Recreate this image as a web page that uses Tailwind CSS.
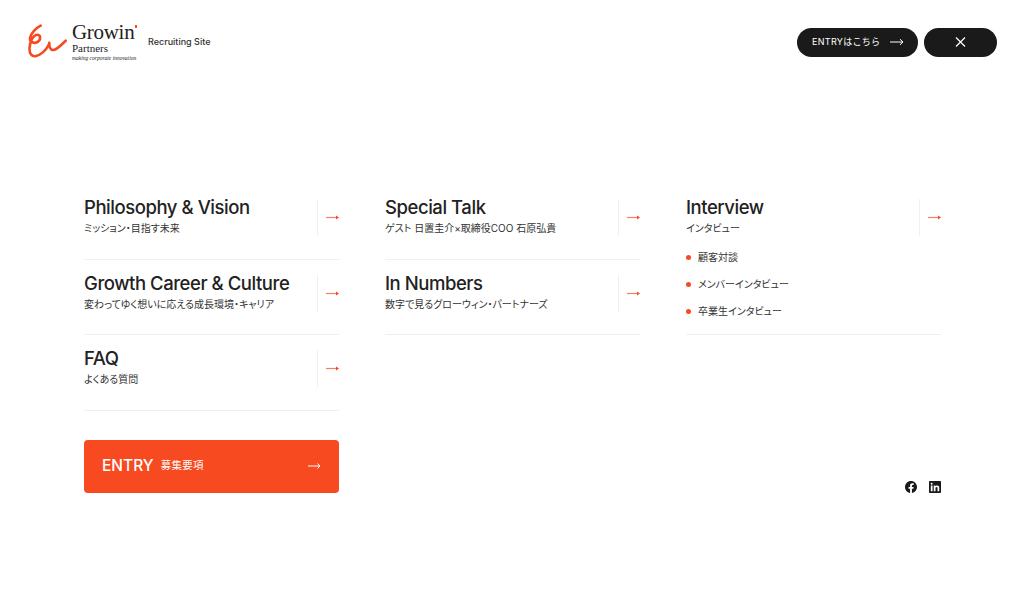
<!DOCTYPE html>
<html lang="ja">
<head>
    <meta charset="UTF-8">
    <meta name="viewport" content="width=device-width, initial-scale=1.0">
    <title>Recruiting Site</title>
    <script src="https://cdn.jsdelivr.net/npm/@tailwindcss/browser@4"></script>
</head>
<body class="bg-white h-[589px] overflow-hidden text-[#222] font-['Inter','Noto_Sans_CJK_JP',sans-serif]">
    <!-- Header -->
    <header class="flex items-start justify-between h-[197px] px-[27px] pt-[24px]">
        <div class="flex items-start">
            <svg class="w-[41px] h-[37px]" viewBox="0 0 41 37" fill="none" stroke="#f74a20" stroke-width="2.6" stroke-linecap="round" stroke-linejoin="round">
                <path d="M13.700 1.700C9 4 4 9 3 14C2.500 18 7 20 10.500 18C14 16 14 11 10.500 10.700C6.500 10.500 3 17 2.500 24C2.200 30 5 33 9 32C14 31 19 26 21 22C22 20 22.300 19 22.300 18.700C22 23 23.500 26 26 26C30 26 35 20 38.700 16.700"/>
            </svg>
            <div class="ml-[4px] w-[66px] font-['Liberation_Serif',serif] text-[#222]">
                <div class="flex items-start text-[21px] h-[17px] tracking-[-0.3px] leading-[17px] whitespace-nowrap">Growin<span class="ml-[1px] mt-[1px] w-[2px] h-[3px] bg-[#f74a20]"></span></div>
                <div class="text-[11px] h-[12px] mt-[1px] leading-[12px]">Partners</div>
                <div class="text-[5.500px] h-[6px] italic mt-[1px] leading-[6px] whitespace-nowrap">making corporate innovation</div>
            </div>
            <span class="ml-[10px] mt-[12px] text-[9px] leading-[12px] text-[#333] font-medium">Recruiting Site</span>
        </div>
        <div class="flex gap-[6px] mt-[4px]">
            <a class="w-[121px] h-[29px] pb-[1px] rounded-full bg-[#1a1a1a] text-white flex items-center justify-between pl-[15px] pr-[14px] text-[9px] tracking-[0.3px]">
                <span>ENTRYはこちら</span>
                <svg class="w-[14px] h-[8px]" viewBox="0 0 14 8" fill="none" stroke="#fff" stroke-width="1"><path d="M0 4H13M10 1.200L13 4L10 6.800"/></svg>
            </a>
            <a class="w-[73px] h-[29px] pb-[1px] rounded-full bg-[#1a1a1a] flex items-center justify-center">
                <svg class="w-[11px] h-[10px]" viewBox="0 0 11 10" fill="none" stroke="#fff" stroke-width="1.200"><path d="M1 .5L10 9.500M10 .5L1 9.500"/></svg>
            </a>
        </div>
    </header>

    <main class="grid grid-cols-[255px_255px_255px] gap-x-[46px] px-[84px] [font-feature-settings:'palt']">
        <!-- Column 1 -->
        <div>
            <a class="flex h-[62.500px] border-b border-[#f0f0f0]">
                <div class="flex-1">
                    <h2 class="text-[18.500px] font-[450] leading-[20px] tracking-[-0.45px]">Philosophy &amp; Vision</h2>
                    <p class="mt-[5px] text-[10px] leading-[13px] text-[#333]">ミッション・目指す未来</p>
                </div>
                <div class="w-[22px] h-[37px] mt-[2px] border-l border-[#f0f0f0] flex items-center justify-end">
                    <svg class="w-[13px] h-[5px]" viewBox="0 0 13 5"><path d="M0 2.500H10" stroke="#f74a20" stroke-width="1.200" opacity=".7"/><path d="M10 .5L13 2.500L10 4.500Z" fill="#f74a20"/></svg>
                </div>
            </a>
            <a class="flex h-[75.500px] pt-[13px] border-b border-[#f0f0f0]">
                <div class="flex-1">
                    <h2 class="text-[18.500px] font-[450] leading-[20px] tracking-[-0.45px] whitespace-nowrap">Growth Career &amp; Culture</h2>
                    <p class="mt-[5px] text-[10px] leading-[13px] text-[#333]">変わってゆく想いに応える成長環境・キャリア</p>
                </div>
                <div class="w-[22px] h-[37px] mt-[2px] border-l border-[#f0f0f0] flex items-center justify-end">
                    <svg class="w-[13px] h-[5px]" viewBox="0 0 13 5"><path d="M0 2.500H10" stroke="#f74a20" stroke-width="1.200" opacity=".7"/><path d="M10 .5L13 2.500L10 4.500Z" fill="#f74a20"/></svg>
                </div>
            </a>
            <a class="flex h-[75.500px] pt-[13px] border-b border-[#f0f0f0]">
                <div class="flex-1">
                    <h2 class="text-[18.500px] font-[450] leading-[20px] tracking-[-0.45px]">FAQ</h2>
                    <p class="mt-[5px] text-[10px] leading-[13px] text-[#333]">よくある質問</p>
                </div>
                <div class="w-[22px] h-[37px] mt-[2px] border-l border-[#f0f0f0] flex items-center justify-end">
                    <svg class="w-[13px] h-[5px]" viewBox="0 0 13 5"><path d="M0 2.500H10" stroke="#f74a20" stroke-width="1.200" opacity=".7"/><path d="M10 .5L13 2.500L10 4.500Z" fill="#f74a20"/></svg>
                </div>
            </a>
            <a class="mt-[29px] h-[53px] rounded-[4px] bg-[#f74a20] text-white flex items-center px-[18px]">
                <span class="text-[15.500px] font-[450]">ENTRY</span>
                <span class="ml-[7px] text-[10.500px] tracking-[0.3px]">募集要項</span>
                <svg class="ml-auto w-[13px] h-[8px]" viewBox="0 0 13 8" fill="none" stroke="#fff" stroke-width="1"><path d="M0 4H12M9.500 1.500L12 4L9.500 6.500"/></svg>
            </a>
        </div>

        <!-- Column 2 -->
        <div>
            <a class="flex h-[62.500px] border-b border-[#f0f0f0]">
                <div class="flex-1">
                    <h2 class="text-[18.500px] font-[450] leading-[20px] tracking-[-0.45px]">Special Talk</h2>
                    <p class="mt-[5px] text-[10px] leading-[13px] text-[#333]">ゲスト 日置圭介×取締役COO 石原弘貴</p>
                </div>
                <div class="w-[22px] h-[37px] mt-[2px] border-l border-[#f0f0f0] flex items-center justify-end">
                    <svg class="w-[13px] h-[5px]" viewBox="0 0 13 5"><path d="M0 2.500H10" stroke="#f74a20" stroke-width="1.200" opacity=".7"/><path d="M10 .5L13 2.500L10 4.500Z" fill="#f74a20"/></svg>
                </div>
            </a>
            <a class="flex h-[75.500px] pt-[13px] border-b border-[#f0f0f0]">
                <div class="flex-1">
                    <h2 class="text-[18.500px] font-[450] leading-[20px] tracking-[-0.45px]">In Numbers</h2>
                    <p class="mt-[5px] text-[10px] leading-[13px] text-[#333]">数字で見るグローウィン・パートナーズ</p>
                </div>
                <div class="w-[22px] h-[37px] mt-[2px] border-l border-[#f0f0f0] flex items-center justify-end">
                    <svg class="w-[13px] h-[5px]" viewBox="0 0 13 5"><path d="M0 2.500H10" stroke="#f74a20" stroke-width="1.200" opacity=".7"/><path d="M10 .5L13 2.500L10 4.500Z" fill="#f74a20"/></svg>
                </div>
            </a>
        </div>

        <!-- Column 3 -->
        <div class="flex flex-col h-[296px]">
            <a class="flex">
                <div class="flex-1">
                    <h2 class="text-[18.500px] font-[450] leading-[20px] tracking-[-0.45px]">Interview</h2>
                    <p class="mt-[5px] text-[10px] leading-[13px] text-[#333]">インタビュー</p>
                </div>
                <div class="w-[22px] h-[37px] mt-[2px] border-l border-[#f0f0f0] flex items-center justify-end">
                    <svg class="w-[13px] h-[5px]" viewBox="0 0 13 5"><path d="M0 2.500H10" stroke="#f74a20" stroke-width="1.200" opacity=".7"/><path d="M10 .5L13 2.500L10 4.500Z" fill="#f74a20"/></svg>
                </div>
            </a>
            <ul class="mt-[15px] h-[84px] border-b border-[#f0f0f0] text-[10px] text-[#333] flex flex-col gap-[14px] leading-[13px]">
                <li class="flex items-center gap-[7px]"><span class="w-[5px] h-[5px] rounded-full bg-[#f74a20]"></span>顧客対談</li>
                <li class="flex items-center gap-[7px]"><span class="w-[5px] h-[5px] rounded-full bg-[#f74a20]"></span>メンバーインタビュー</li>
                <li class="flex items-center gap-[7px]"><span class="w-[5px] h-[5px] rounded-full bg-[#f74a20]"></span>卒業生インタビュー</li>
            </ul>
            <div class="mt-auto flex justify-end items-center gap-[12px]">
                <svg class="w-[12px] h-[12px]" viewBox="0 0 24 24" fill="#1a1a1a"><path d="M24 12.070C24 5.400 18.630 0 12 0S0 5.400 0 12.070C0 18.100 4.390 23.090 10.130 24v-8.440H7.080v-3.490h3.050V9.410c0-3.020 1.790-4.690 4.530-4.690 1.310 0 2.690.24 2.690.24v2.970h-1.520c-1.490 0-1.960.93-1.960 1.890v2.250h3.330l-.53 3.490h-2.800V24C19.610 23.090 24 18.100 24 12.070z"/></svg>
                <svg class="w-[12px] h-[12px]" viewBox="0 0 24 24" fill="#1a1a1a"><path d="M22 0H2C.9 0 0 .9 0 2v20c0 1.100.9 2 2 2h20c1.100 0 2-.9 2-2V2c0-1.100-.9-2-2-2zM7.100 20.500H3.600V9h3.500v11.500zM5.350 7.400a2 2 0 1 1 0-4 2 2 0 0 1 0 4zM20.500 20.500H17v-5.600c0-1.340-.03-3.060-1.860-3.060-1.870 0-2.150 1.460-2.150 2.960v5.700H9.500V9h3.360v1.570h.05c.47-.88 1.600-1.810 3.300-1.810 3.530 0 4.290 2.320 4.290 5.340v6.400z"/></svg>
            </div>
        </div>
    </main>
</body>
</html>
